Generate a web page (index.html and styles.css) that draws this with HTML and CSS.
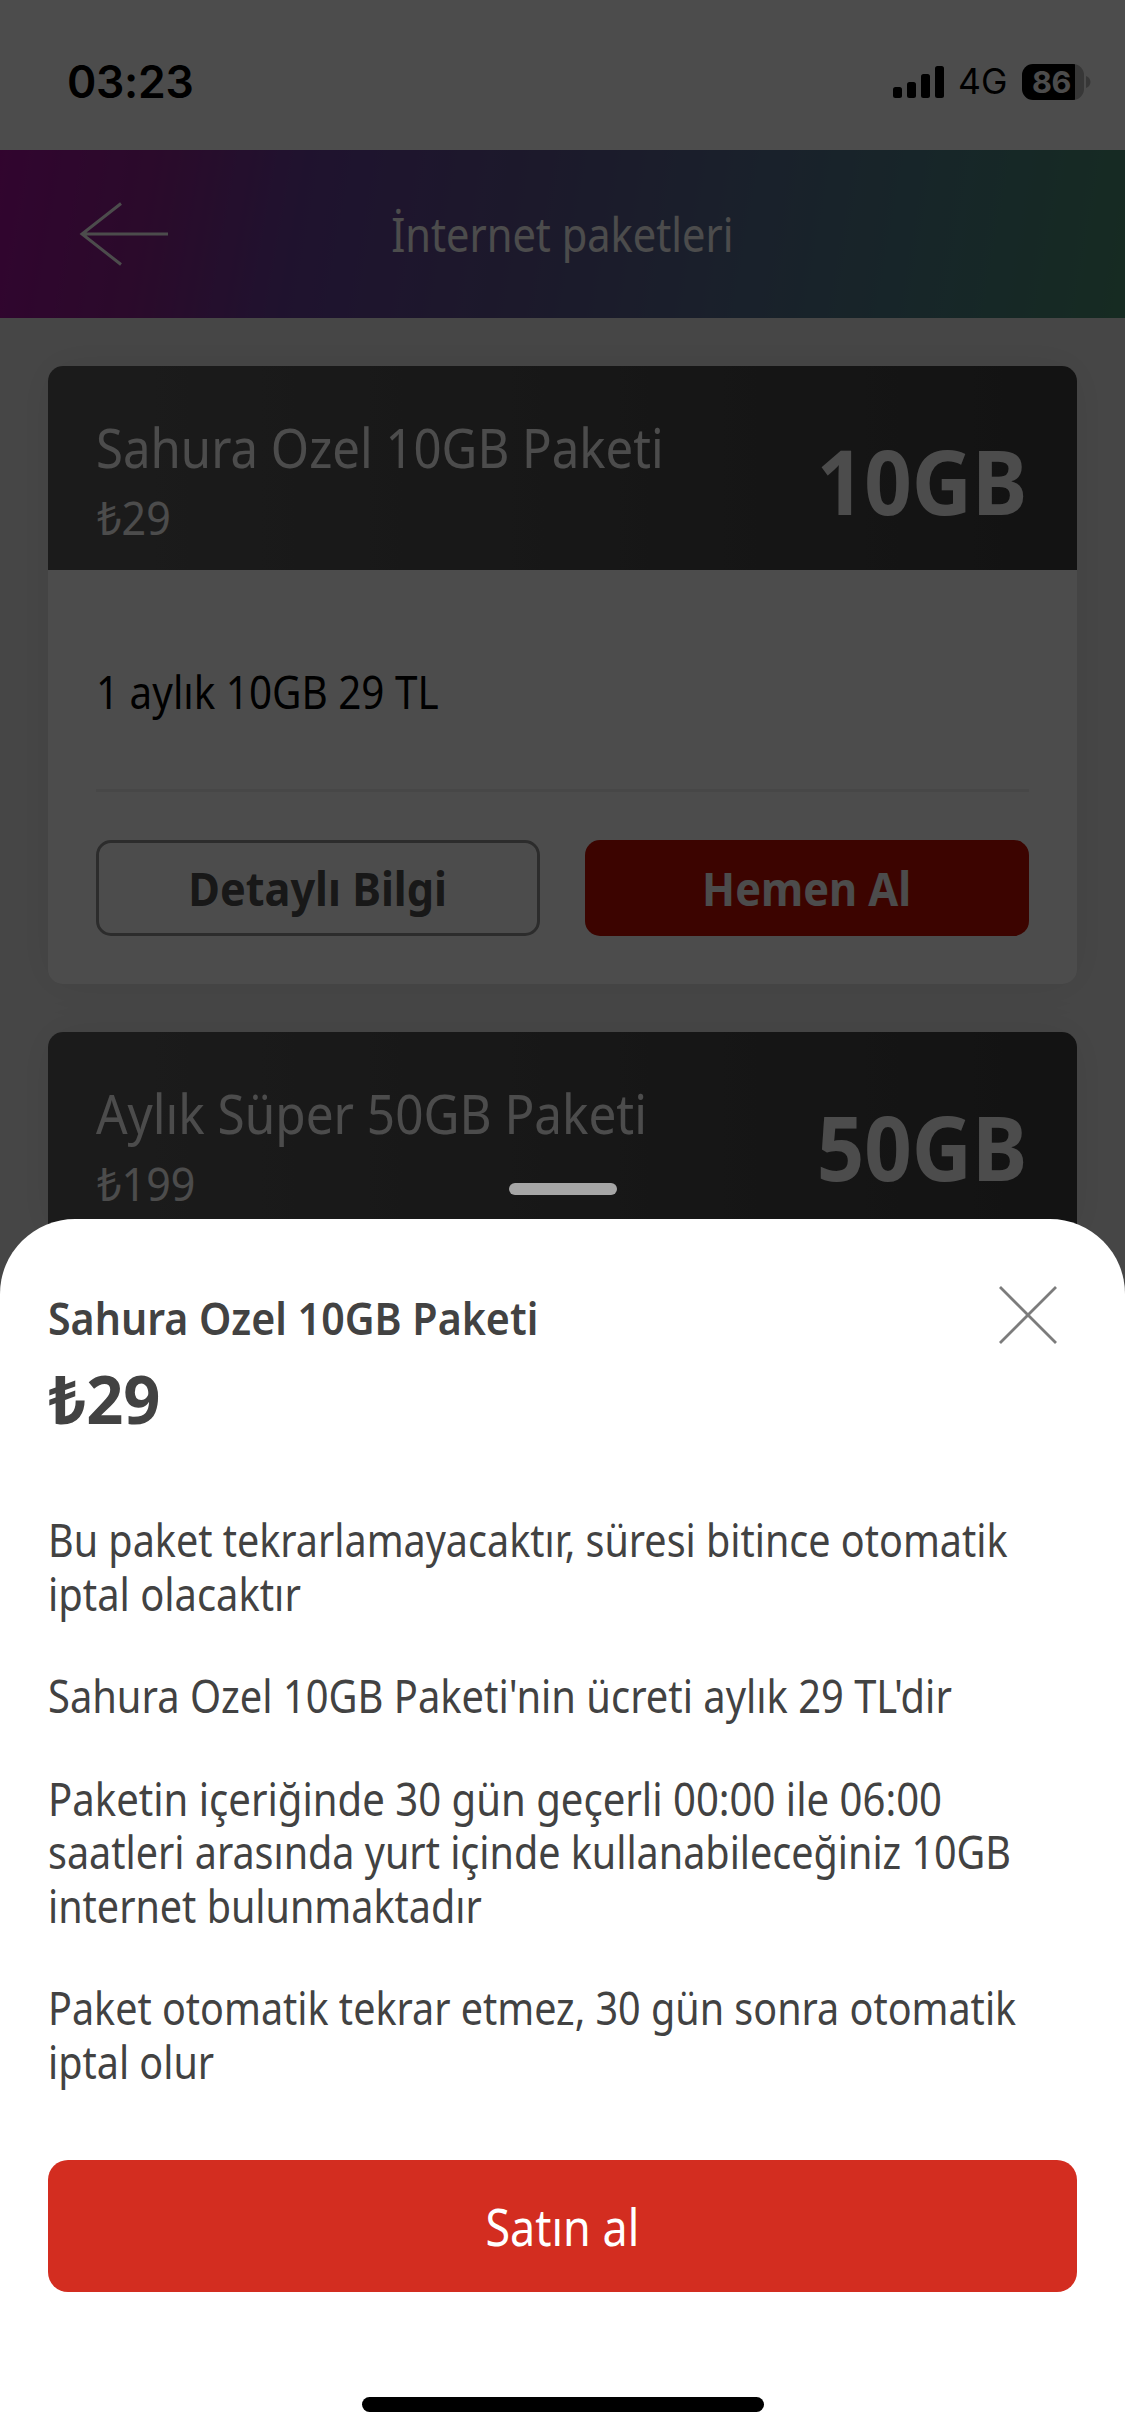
FILE: index.html
```
<!DOCTYPE html>
<html lang="tr">
<head>
<meta charset="utf-8">
<title>İnternet paketleri</title>
<link rel="stylesheet" href="styles.css">
</head>
<body>
<div class="screen">
  <div class="status">
    <span class="time">03:23</span>
    <div class="indicators">
      <svg class="signal" width="51" height="32" viewBox="0 0 51 32">
        <rect x="0" y="21" width="9" height="11" rx="2.5"/>
        <rect x="14" y="16" width="9" height="16" rx="2.5"/>
        <rect x="28" y="8" width="9" height="24" rx="2.5"/>
        <rect x="42" y="0" width="9" height="32" rx="2.5"/>
      </svg>
      <span class="network">4G</span>
      <div class="battery"><span class="level">86</span></div>
      <svg width="5" height="12" viewBox="0 0 5 12"><path d="M0 0C3 1 4.5 3.500 4.500 6S3 11 0 12Z" fill="#000" fill-opacity=".28"/></svg>
    </div>
  </div>

  <header class="topbar">
    <svg class="back" width="90" height="66" viewBox="0 0 90 66"><path d="M42 2.500 3 33 42 63.500M3 33H89"/></svg>
    <h1 class="page-title"><span class="fit">İnternet paketleri</span></h1>
  </header>

  <main class="list">
    <article class="card">
      <div class="card-head">
        <div class="card-info">
          <h2 class="card-title"><span class="fit">Sahura Ozel 10GB Paketi</span></h2>
          <p class="card-price"><span class="fit">₺29</span></p>
        </div>
        <div class="quota"><span class="fit">10GB</span></div>
      </div>
      <div class="card-body">
        <p class="summary"><span class="fit">1 aylık 10GB 29 TL</span></p>
        <div class="actions">
          <button class="btn outline"><span class="fit">Detaylı Bilgi</span></button>
          <button class="btn solid"><span class="fit">Hemen Al</span></button>
        </div>
      </div>
    </article>
    <article class="card">
      <div class="card-head">
        <div class="card-info">
          <h2 class="card-title second"><span class="fit">Aylık Süper 50GB Paketi</span></h2>
          <p class="card-price"><span class="fit">₺199</span></p>
        </div>
        <div class="quota"><span class="fit">50GB</span></div>
      </div>
    </article>
  </main>

  <div class="scrim"></div>

  <section class="sheet">
    <div class="grabber"></div>
    <div class="panel">
      <div class="sheet-head">
        <h2 class="sheet-title"><span class="fit">Sahura Ozel 10GB Paketi</span></h2>
        <svg class="close" width="58" height="58" viewBox="0 0 58 58"><path d="M1 1 57 57M57 1 1 57"/></svg>
      </div>
      <p class="sheet-price"><span class="fit">₺29</span></p>
      <div class="terms">
        <p><span class="fit">Bu paket tekrarlamayacaktır, süresi bitince otomatik</span><span class="fit wide">iptal olacaktır</span></p>
        <p><span class="fit wide">Sahura Ozel 10GB Paketi'nin ücreti aylık 29 TL'dir</span></p>
        <p><span class="fit wider">Paketin içeriğinde 30 gün geçerli 00:00 ile 06:00</span><span class="fit">saatleri arasında yurt içinde kullanabileceğiniz 10GB</span><span class="fit">internet bulunmaktadır</span></p>
        <p><span class="fit">Paket otomatik tekrar etmez, 30 gün sonra otomatik</span><span class="fit">iptal olur</span></p>
      </div>
      <button class="buy"><span class="fit">Satın al</span></button>
      <div class="home-bar"></div>
    </div>
  </section>
</div>
</body>
</html>
```
FILE: styles.css
```
* { box-sizing: border-box; margin: 0; padding: 0; }
body { width: 1125px; height: 2436px; overflow: hidden; font-family: "Noto Sans", sans-serif; }
button { border: 0; font-family: inherit; }

.screen { position: relative; height: 2436px; overflow: hidden; background: #ebebeb; }

.fit { display: block; width: max-content; white-space: nowrap; transform: scaleX(var(--narrow, .868)); transform-origin: left center; }

.status { display: flex; justify-content: space-between; height: 150px; padding: 0 34px 0 67px; background: #fff; font-family: Inter, sans-serif; color: #000; }
.time { font-size: 44.5px; font-weight: 600; line-height: 165px; letter-spacing: -.3px; }
.indicators { display: flex; align-items: center; height: 164px; }
.signal { margin-right: 14px; }
.network { width: 64px; font-size: 35.5px; line-height: 166px; white-space: nowrap; }
.battery { width: 62px; height: 36px; margin-right: 2px; border-radius: 11px; overflow: hidden; background: linear-gradient(90deg, #000 53px, #b7b7b7 53px); }
.level { display: block; padding-left: 10px; font-size: 30.5px; font-weight: 700; line-height: 36px; letter-spacing: -.3px; color: #fff; }

.topbar { display: grid; grid-template-columns: 310px 1fr 310px; align-items: center; height: 168px; background: linear-gradient(100deg, #a4109c 0%, #8e2490 14%, #693f9c 27%, #5e5690 48%, #566e90 66%, #4d8088 82%, #4a9072 100%); }
.back { margin-left: 79px; fill: none; stroke: #fff; stroke-width: 3; }
.page-title { display: flex; justify-content: center; font-size: 47px; font-weight: 400; line-height: 64px; color: #fff; }
.page-title .fit { --narrow: .885; transform-origin: center; }

.list { display: flex; flex-direction: column; gap: 48px; padding: 48px; }
.card { border-radius: 15px; background: #fff; box-shadow: 0 0 45px rgba(0, 0, 0, .07); }
.card-head { display: flex; justify-content: space-between; height: 204px; padding: 0 50px 0 48px; border-radius: 15px 15px 0 0; background: linear-gradient(90deg, #5d5d5d, #404040); color: #fff; }
.card-info { padding-top: 46px; }
.card-title { font-size: 55px; font-weight: 400; line-height: 70px; }
.card-title .fit { --narrow: .893; }
.card-title.second .fit { --narrow: .899; }
.card-price { padding: 1px 0 0 1px; font-size: 45px; line-height: 70px; }
.card-price .fit { --narrow: .955; }
.quota { font-size: 89px; font-weight: 700; line-height: 229px; }
.quota .fit { --narrow: .935; transform-origin: right center; }
.card-body { height: 414px; padding: 0 48px; }
.summary { height: 222px; padding-top: 91px; border-bottom: 3px solid #efefef; font-size: 45px; line-height: 61px; color: #000; }
.summary .fit { --narrow: .898; }
.actions { display: grid; grid-template-columns: 1fr 1fr; gap: 45px; padding-top: 48px; }
.btn { display: flex; justify-content: center; align-items: center; height: 96px; border-radius: 15px; font-size: 47px; font-weight: 700; line-height: 60px; }
.btn .fit { --narrow: .92; transform-origin: center; }
.outline { border: 3px solid #939393; background: #fff; color: #505050; }
.solid { background: #c81000; color: #fff; }

.scrim { position: absolute; inset: 0; background: rgba(0, 0, 0, .7); }

.sheet { position: absolute; left: 0; right: 0; bottom: 0; }
.grabber { width: 108px; height: 12px; margin: 0 auto 24px; border-radius: 6px; background: #a6a6a6; }
.panel { height: 1217px; padding: 0 48px; border-radius: 75px 75px 0 0; background: #fff; color: #424242; }
.sheet-head { display: flex; justify-content: space-between; padding: 67px 20px 0 0; }
.sheet-title { padding-top: 1px; font-size: 45px; font-weight: 600; line-height: 62px; }
.sheet-title .fit { --narrow: .914; }
.close { fill: none; stroke: #7c7c7c; stroke-width: 2.8; }
.sheet-price { padding-left: 1px; font-size: 67px; font-weight: 700; line-height: 98px; }
.sheet-price .fit { --narrow: .97; }
.terms { display: flex; flex-direction: column; gap: 49px; padding-top: 66px; font-size: 45.5px; line-height: 53.5px; }
.wide { --narrow: .876; }
.wider { --narrow: .881; }
.buy { display: flex; justify-content: center; align-items: center; width: 100%; height: 132px; margin-top: 72px; border-radius: 20px; background: #d32d20; color: #fff; font-size: 51px; }
.buy .fit { --narrow: .88; transform-origin: center; }
.home-bar { width: 402px; height: 15px; margin: 105px auto 0; border-radius: 8px; background: #000; }
```
